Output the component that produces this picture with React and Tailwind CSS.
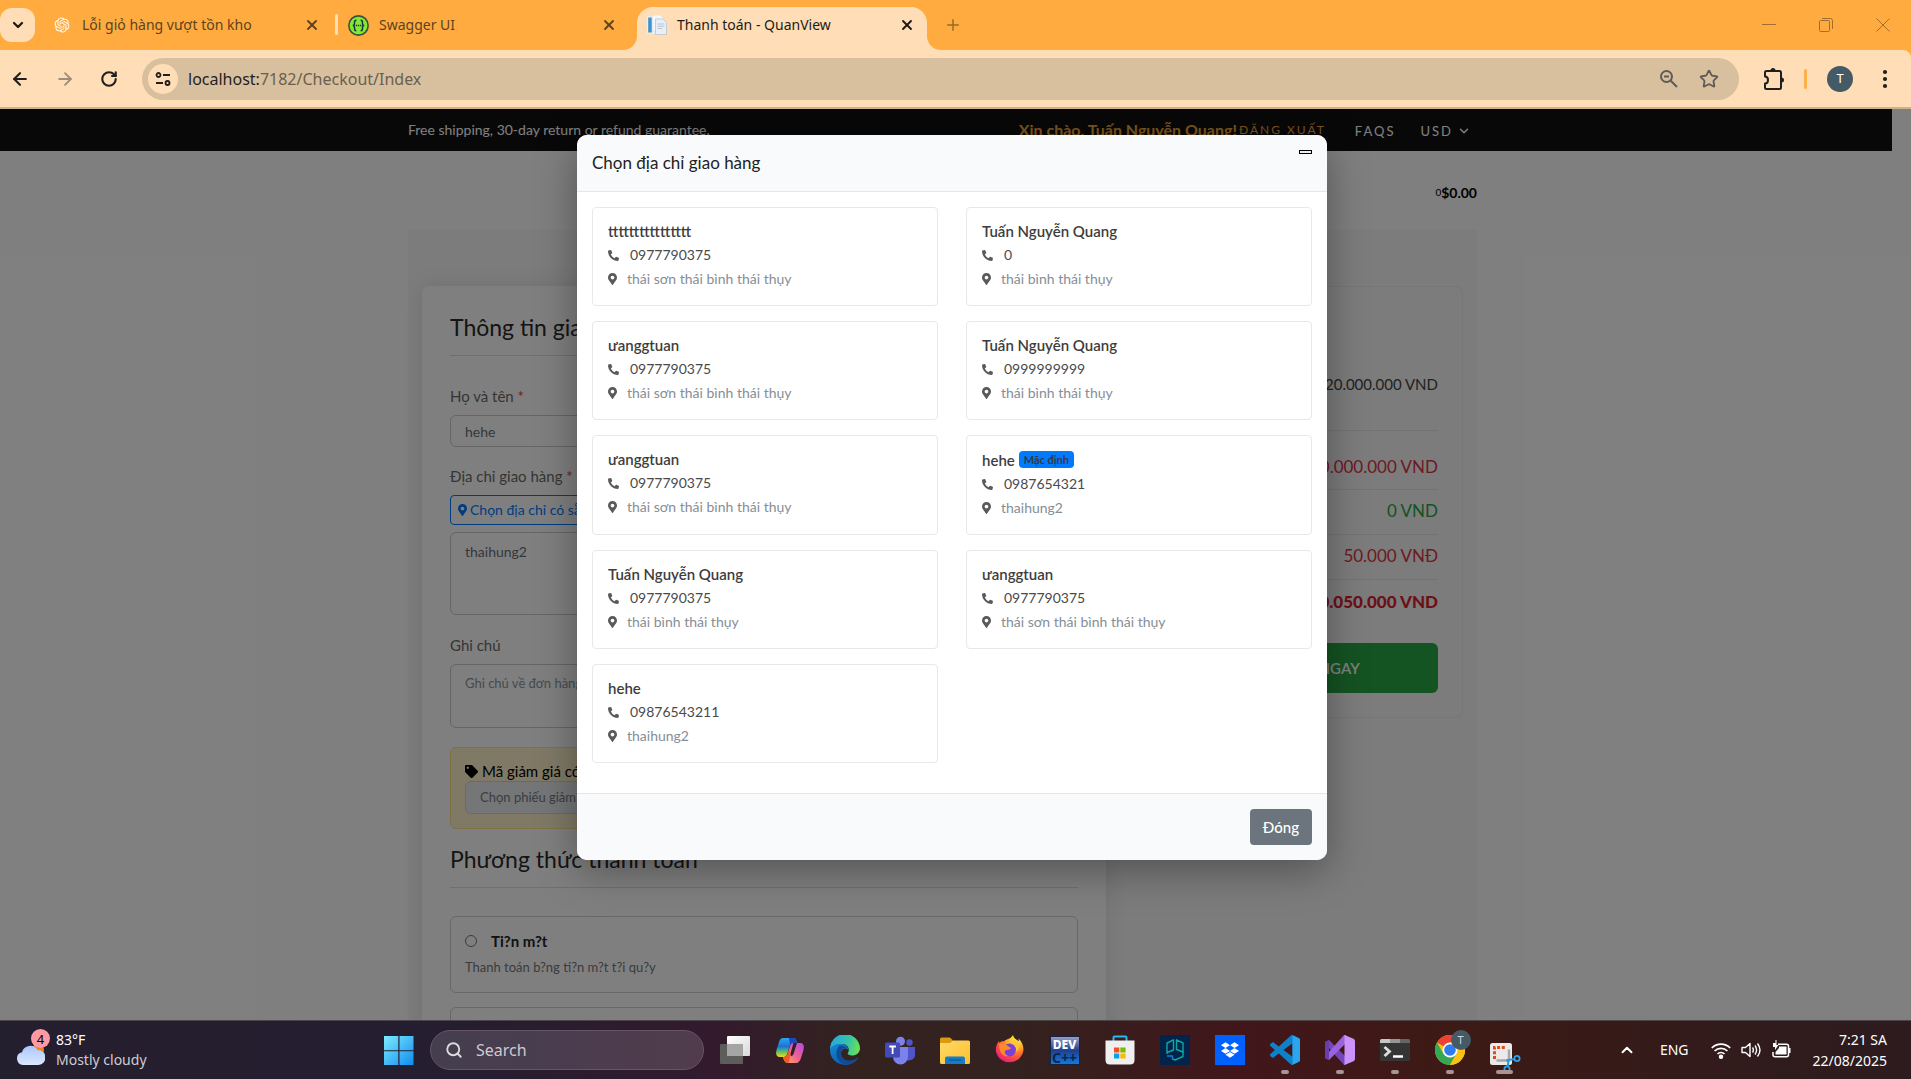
import React from "react";
import { ArrowLeft, ArrowRight, ChevronDown, ChevronUp, Plus, RotateCw, Search, Star, X } from "lucide-react";
import { FaDropbox, FaMapMarkerAlt, FaPhoneAlt, FaTag } from "react-icons/fa";
import { RiOpenaiFill } from "react-icons/ri";

/* ---------- Browser window ---------- */

function SwaggerIcon() {
  return (
    <svg viewBox="0 0 20 20" className="size-[21px] shrink-0">
      <circle cx="10" cy="10" r="9.2" fill="#85ea2d" stroke="#35543f" strokeWidth="1.5" />
      <path d="M8 5C6 5 6.200 6.500 6.200 8 6.200 9.300 5.600 10 4.500 10 5.600 10 6.200 10.700 6.200 12 6.200 13.500 6 15 8 15" fill="none" stroke="#173647" strokeWidth="1.4" />
      <path d="M12 5C14 5 13.800 6.500 13.800 8 13.800 9.300 14.400 10 15.500 10 14.400 10 13.800 10.700 13.800 12 13.800 13.500 14 15 12 15" fill="none" stroke="#173647" strokeWidth="1.4" />
      <path d="M7.400 10h5.400" stroke="#173647" strokeWidth="1.5" strokeDasharray="1.300 .7" />
    </svg>
  );
}

function PageIcon() {
  return (
    <svg viewBox="0 0 20 20" className="size-5 shrink-0">
      <path d="M0 1.500h12v17H0z" fill="#e9f1f8" />
      <path d="M1.200 2.500h3.600v15H1.200z" fill="#3d93cf" />
      <path d="M5.200 0h8l3.500 3.500V16H5.200z" fill="#f3f7fb" stroke="#c9d4df" strokeWidth=".5" />
      <path d="M8.500 4h7.500l3.500 3.500v12H8.500z" fill="#e8eff6" stroke="#a9b8c8" strokeWidth=".6" />
      <path d="M10.500 9h7M10.500 11.200h7M10.500 13.400h5" stroke="#b5c0cc" strokeWidth=".9" />
    </svg>
  );
}

function TabClose({ dark }) {
  return (
    <button aria-label="Close tab" className={dark ? "text-[#1f1a14]" : "text-[#5c431f]"}>
      <X className="size-4" strokeWidth={2.8} />
    </button>
  );
}

function TabStrip() {
  return (
    <div className="flex h-[50px] items-end bg-[#ffab40]">
      <button aria-label="Search tabs" className="mb-2 flex h-[34px] w-[35px] shrink-0 items-center justify-center rounded-xl bg-[#ffdeb7] text-[#1f1a14]">
        <ChevronDown className="size-4" strokeWidth={3.4} />
      </button>
      <div className="flex h-[50px] w-[300px] shrink-0 items-center pl-[18px] pr-[15px] text-sm text-[#5c431f]">
        <RiOpenaiFill className="size-[18px] text-white" />
        <span className="ml-[11px] flex-1 whitespace-nowrap">Lỗi giỏ hàng vượt tồn kho</span>
        <TabClose />
      </div>
      <div className="mb-[15px] h-[21px] w-[3px] shrink-0 rounded bg-[#ffdeb7]" />
      <div className="flex h-[50px] w-[299px] shrink-0 items-center pl-[10px] pr-[20px] text-sm text-[#5c431f]">
        <SwaggerIcon />
        <span className="ml-[10px] flex-1">Swagger UI</span>
        <TabClose />
      </div>
      <div className="relative flex h-[43px] w-[290px] shrink-0 items-center rounded-t-2xl bg-[#ffdeb7] pb-[7px] pl-[10px] pr-[12px] text-sm text-[#1f1a14]">
        <svg viewBox="0 0 14 14" className="absolute -left-[14px] bottom-0 size-[14px]"><path d="M14 0v14H0A14 14 0 0 0 14 0z" fill="#ffdeb7" /></svg>
        <svg viewBox="0 0 14 14" className="absolute -right-[14px] bottom-0 size-[14px]"><path d="M0 0v14h14A14 14 0 0 1 0 0z" fill="#ffdeb7" /></svg>
        <PageIcon />
        <span className="ml-[10px] flex-1">Thanh toán - QuanView</span>
        <TabClose dark />
      </div>
      <button aria-label="New tab" className="mb-[16px] ml-[17px] text-[#9b6a2b]"><Plus className="size-[18px]" /></button>
      <div className="ml-auto flex h-[50px] items-center gap-[43px] pr-[21px] text-[#a06e2e]">
        <button aria-label="Minimize"><svg viewBox="0 0 14 14" className="size-[14px]"><path d="M0 6.500h14" stroke="currentColor" /></svg></button>
        <button aria-label="Restore"><svg viewBox="0 0 14 14" className="size-[14px]" fill="none" stroke="currentColor"><rect x=".5" y="2.500" width="10" height="11" rx="1" /><path d="M3 .5h8.500a2 2 0 0 1 2 2V11" /></svg></button>
        <button aria-label="Close"><svg viewBox="0 0 14 14" className="size-[14px]"><path d="M.5.5l13 13M13.500.5l-13 13" stroke="currentColor" /></svg></button>
      </div>
    </div>
  );
}

function Toolbar() {
  return (
    <div className="bg-[#ffab40]">
      <div className="flex h-[59px] items-center rounded-tr-lg border-b-2 border-[#cdb189] bg-[#ffdeb7] pl-[10px] text-[#1f1f1f]">
        <div className="flex w-[132px] shrink-0 items-center gap-[25px]">
          <button aria-label="Back"><ArrowLeft className="size-5" strokeWidth={2.5} /></button>
          <button aria-label="Forward" className="text-[#9c8e7b]"><ArrowRight className="size-5" strokeWidth={2.2} /></button>
          <button aria-label="Reload"><RotateCw className="size-[18px]" strokeWidth={2.8} /></button>
        </div>
        <div className="flex h-[42px] flex-1 items-center rounded-full bg-[#d8c09e] pl-[6px] pr-5">
          <button aria-label="Site information" className="flex size-[30px] items-center justify-center rounded-full bg-[#ffdeb7]">
            <svg viewBox="0 0 16 16" className="size-4" fill="none" stroke="currentColor" strokeWidth="1.8">
              <circle cx="3.500" cy="4" r="2" /><path d="M8 4h7M1 12h7" /><circle cx="12.500" cy="12" r="2" />
            </svg>
          </button>
          <div className="relative ml-[10px] flex-1 text-[16px]">
            <div aria-hidden="true"><span>localhost:</span><span className="text-[#6a5f50]">7182/Checkout/Index</span></div>
            <input aria-label="Address" className="absolute inset-0 w-full bg-transparent text-transparent outline-none" defaultValue="localhost:7182/Checkout/Index" />
          </div>
          <div className="flex items-center gap-5 text-[#5f5b58]">
            <button aria-label="Zoom">
              <svg viewBox="0 0 20 20" className="size-5" fill="none" stroke="currentColor" strokeWidth="2"><circle cx="7.500" cy="7.500" r="5.500" /><path d="M11.500 11.500l6.500 6.500M5 7.500h5" /></svg>
            </button>
            <button aria-label="Bookmark"><Star className="size-5" strokeWidth={2.2} strokeLinejoin="miter" /></button>
          </div>
        </div>
        <button aria-label="Extensions" className="ml-[24px]">
          <svg viewBox="0 0 22 24" className="h-6 w-[22px]" fill="none" stroke="currentColor" strokeWidth="2">
            <path d="M2 5.500Q2 4 3.500 4H16.500Q18 4 18 5.500V20.500Q18 22 16.500 22H3.500Q2 22 2 20.500V16.500C6 16.500 6 9.500 2 9.500z" strokeLinejoin="round" />
            <path d="M7.500 3.500a2.500 2.500 0 0 1 5 0zM18.500 10.500a2.500 2.500 0 0 1 0 5z" fill="currentColor" stroke="none" />
          </svg>
        </button>
        <div className="ml-[19px] h-5 w-[3px] rounded bg-[#ffb04a]" />
        <button aria-label="Profile" className="ml-[20px] flex size-[26px] items-center justify-center rounded-full bg-[#455a64] text-[13px] text-white">T</button>
        <button aria-label="Menu" className="ml-[29px] mr-[23px]">
          <svg viewBox="0 0 6 20" className="h-5 w-[6px]" fill="currentColor"><circle cx="3" cy="3" r="2.1" /><circle cx="3" cy="10" r="2.1" /><circle cx="3" cy="17" r="2.1" /></svg>
        </button>
      </div>
    </div>
  );
}

/* ---------- Checkout page ---------- */

function Field({ id, label, required, children, className = "" }) {
  return (
    <div className={className}>
      <label htmlFor={id} className="mb-[7px] block text-[15px] leading-6 text-[#6b6b6b]">
        {label}{required && <span className="text-[#dc3545]"> *</span>}
      </label>
      {children}
    </div>
  );
}

function SectionTitle({ children }) {
  return <h4 className="mb-7 border-b border-[#dedede] pb-[15px] text-[23px] leading-[26px] text-[#2a2a2a]">{children}</h4>;
}

const inputStyle = "block w-full rounded-md border border-[#c6cace] bg-white px-[14px] text-sm text-[#6a6f75] placeholder:text-[13px] placeholder:text-[#8d949b]";

function PaymentOption({ title, text }) {
  return (
    <div className="mb-[14px] h-[77px] rounded-md border border-[#cdd0d3] px-[14px] pt-[12px]">
      <label className="flex items-center text-[15px] font-bold leading-6 text-[#222]">
        <input type="radio" name="payment" className="mr-[14px] size-3" />{title}
      </label>
      <p className="mt-[2px] text-[13px] leading-6 text-[#777]">{text}</p>
    </div>
  );
}

function ShippingForm() {
  return (
    <form className="w-2/3 shrink-0 pl-[14px] pr-[15px]">
      <div className="rounded-lg bg-white px-7 pt-7 shadow-[0_0_22px_rgba(0,20,15,0.1)]">
        <SectionTitle>Thông tin giao hàng</SectionTitle>
        <Field id="name" label="Họ và tên" required className="mb-[17px]">
          <input id="name" className={inputStyle + " h-[32px]"} defaultValue="hehe" />
        </Field>
        <Field id="address" label="Địa chỉ giao hàng" required className="mb-[18px]">
          <button type="button" className="mb-[7px] flex h-[30px] items-center rounded-sm border border-[#007bff] px-[7px] text-sm text-[#007bff]">
            <FaMapMarkerAlt className="mr-[3px] h-3 w-[9px]" />Chọn địa chỉ có sẵn
          </button>
          <textarea id="address" className={inputStyle + " h-[83px] resize-none py-[9px]"} defaultValue="thaihung2" />
        </Field>
        <Field id="note" label="Ghi chú" className="mb-[19px]">
          <textarea id="note" className={inputStyle + " h-16 resize-none py-[9px]"} placeholder="Ghi chú về đơn hàng" />
        </Field>
        <div className="mb-[17px] rounded-md border border-[#ffe08a] bg-[#fff3cd] px-[14px] pb-[14px] pt-[13px]">
          <label htmlFor="voucher" className="flex items-center text-[15px] leading-5 text-black">
            <FaTag className="mr-1 size-[13px]" />Mã giảm giá có sẵn
          </label>
          <select id="voucher" className="block h-[33px] w-full appearance-none rounded-md border border-[#ced4da] bg-[#e9ecef] px-[14px] text-[13px] text-[#777c82]">
            <option>Chọn phiếu giảm giá</option>
          </select>
        </div>
        <SectionTitle>Phương thức thanh toán</SectionTitle>
        <PaymentOption title="Ti?n m?t" text="Thanh toán b?ng ti?n m?t t?i qu?y" />
        <PaymentOption title="Chuyển khoản" text="Thanh toán qua ngân hàng" />
      </div>
    </form>
  );
}

function OrderSummary() {
  const row = "flex h-[45px] items-center justify-end border-b border-[#e6e6e6] pb-[2px] text-[17px]";
  return (
    <aside className="w-1/3 px-[14px]">
      <div className="rounded-lg border border-[#ececec] px-6 pb-6 pt-[53px]">
        <p className="flex h-[91px] items-center justify-end border-b border-[#e6e6e6] pb-[2px] text-[15px] text-[#444]">20.000.000 VND</p>
        <p className="flex h-[59px] items-end justify-end border-b border-[#e6e6e6] pb-[10px] text-[17px] text-[#dc3545]">20.000.000 VND</p>
        <p className={row + " text-[#28a745]"}>0 VND</p>
        <p className={row + " text-[#dc3545]"}>50.000 VNĐ</p>
        <p className="mb-[18px] flex h-[45px] items-center justify-end pb-[2px] text-[17px] font-black text-[#d9232d]">20.050.000 VND</p>
        <button className="h-[50px] w-full rounded-md bg-[#28a745] text-[15px] font-semibold text-white">ĐẶT HÀNG NGAY</button>
      </div>
    </aside>
  );
}

function CheckoutPage() {
  return (
    <div className="h-full bg-white">
      <div className="mr-[19px] h-[42px] bg-[#111] pr-[7px]">
        <div className="mx-auto flex max-w-[1069px] items-center pt-[9px] leading-[22px]">
          <p className="text-sm text-white">Free shipping, 30-day return or refund guarantee.</p>
          <nav className="ml-auto flex items-center whitespace-nowrap pr-[6px] text-[13px] tracking-[2px] text-white">
            <span className="text-[16px] font-bold tracking-normal text-[#f6a83b]">Xin chào, Tuấn Nguyễn Quang!</span>
            <a href="#logout" className="ml-[2px] text-xs text-[#f6a83b]">ĐĂNG XUẤT</a>
            <a href="#faqs" className="ml-[29px] pt-[2px]">FAQS</a>
            <button className="ml-[25px] flex items-center gap-1 pt-[2px] tracking-[2px]">USD<ChevronDown className="size-[14px]" strokeWidth={2.5} /></button>
          </nav>
        </div>
      </div>
      <div className="pr-[26px]">
        <div className="mx-auto max-w-[1069px]">
          <header className="flex h-[79px] items-center justify-end pt-[4px] text-black">
            <span className="text-[10px]">0</span><span className="text-sm font-bold">$0.00</span>
          </header>
          <section className="flex items-start bg-[#f8f8f8] pt-14">
            <ShippingForm />
            <OrderSummary />
          </section>
        </div>
      </div>
    </div>
  );
}

/* ---------- Address dialog ---------- */

const addresses = [
  { name: "tttttttttttttttt", phone: "0977790375", address: "thái sơn thái bình thái thụy" },
  { name: "Tuấn Nguyễn Quang", phone: "0", address: "thái bình thái thụy" },
  { name: "ưanggtuan", phone: "0977790375", address: "thái sơn thái bình thái thụy" },
  { name: "Tuấn Nguyễn Quang", phone: "0999999999", address: "thái bình thái thụy" },
  { name: "ưanggtuan", phone: "0977790375", address: "thái sơn thái bình thái thụy" },
  { name: "hehe", phone: "0987654321", address: "thaihung2", isDefault: true },
  { name: "Tuấn Nguyễn Quang", phone: "0977790375", address: "thái bình thái thụy" },
  { name: "ưanggtuan", phone: "0977790375", address: "thái sơn thái bình thái thụy" },
  { name: "hehe", phone: "09876543211", address: "thaihung2" },
];

function AddressCard({ name, phone, address, isDefault }) {
  return (
    <div className="min-h-[99px] rounded border border-[#e6e8ea] px-[15px] pb-[14px] pt-[11px] text-[#4a4a4a]">
      <h6 className="flex items-center text-[15px] font-semibold leading-6 text-[#3d3d3d]">
        {name}
        {isDefault && <span className="ml-1 mt-[4px] mb-[4px] rounded bg-[#007bff] px-[5px] text-[11px] font-bold leading-[17px] text-[#33393f]">Mặc định</span>}
      </h6>
      <p className="flex items-center text-sm leading-6"><FaPhoneAlt className="mr-[11px] size-[11px] text-[#5a5a5a]" />{phone}</p>
      <p className="flex items-center text-sm leading-6 text-[#868e96]"><FaMapMarkerAlt className="mr-[10px] h-3 w-[9px] text-[#5a5a5a]" />{address}</p>
    </div>
  );
}

function AddressDialog() {
  return (
    <div role="dialog" aria-modal="true" aria-labelledby="dialog-title" className="w-full max-w-[750px] overflow-hidden rounded-[10px] bg-white shadow-[0_10px_40px_rgba(0,0,0,0.35)]">
      <div className="flex items-start justify-between border-b border-[#e4e7ea] bg-[#f8fafc] p-[15px]">
        <h5 id="dialog-title" className="text-[17px] leading-[26px] text-[#222]">Chọn địa chỉ giao hàng</h5>
        <button aria-label="Close" className="h-[4px] w-[13px] border border-black bg-[#efefef]" />
      </div>
      <div className="grid grid-cols-2 gap-x-7 gap-y-[15px] px-[15px] pb-[30px] pt-[15px]">
        {addresses.map((a, i) => <AddressCard key={i} {...a} />)}
      </div>
      <div className="flex justify-end border-t border-[#e4e7ea] bg-[#f8fafc] p-[15px]">
        <button className="h-9 rounded bg-[#6c757d] px-[13px] text-[15px] font-medium text-white">Đóng</button>
      </div>
    </div>
  );
}

/* ---------- Taskbar ---------- */

const TaskView = () => (
  <svg viewBox="0 0 30 30" className="size-[30px]"><defs><linearGradient id="tvw" x1="0" y1="0" x2="1" y2="1"><stop stopColor="#fff" /><stop offset="1" stopColor="#d9d9d9" /></linearGradient></defs>
    <rect x="7" y="1" width="23" height="20" rx="1" fill="url(#tvw)" /><rect y="9" width="23" height="20" rx="1" fill="#5d5d5b" /><path d="M7 9h16v12H7z" fill="#a5a5a5" /></svg>
);
const Copilot = () => (
  <svg viewBox="0 0 30 30" className="size-[30px]"><defs>
    <linearGradient id="cpl" x1="0" y1="0" x2="0" y2="1"><stop stopColor="#2aa7ef" /><stop offset=".45" stopColor="#1d72d8" /><stop offset=".7" stopColor="#4fc06a" /><stop offset="1" stopColor="#ffd21f" /></linearGradient>
    <linearGradient id="cpr" x1="1" y1="0" x2="0" y2="1"><stop stopColor="#b04be8" /><stop offset=".5" stopColor="#ef5f93" /><stop offset="1" stopColor="#ffb35c" /></linearGradient></defs>
    <path d="M8 3H18.500Q21 3 22 8H17.500Q15.500 8 14.700 11L12.500 18Q11.500 22 8.500 22H4Q0 21 1.500 15L4 7Q5.200 3 8 3z" fill="url(#cpl)" />
    <path d="M14 3h4.500Q21 3 22 8H17.500Q15.500 8 15 10z" fill="#1c46c4" />
    <path d="M22 8h4Q30 9 28.500 15L26 23Q24.500 28 21 28H12Q9 27 8 22h1Q12 22 13 18L15.200 10.500Q16 8 18 8h.5L15.500 18.500Q15 21 16.500 21T19.200 17z" fill="url(#cpr)" />
    <path d="M8 22h1Q12 22 13 18l1-3 1.600 3.500Q15 21 14 27.500L12 28Q9 27 8 22z" fill="#f05a2a" /></svg>
);
const Edge = () => (
  <svg viewBox="0 0 30 30" className="size-[30px]"><defs>
    <linearGradient id="eg1" x1="0" y1=".3" x2="1" y2=".5"><stop stopColor="#25a9e0" /><stop offset=".6" stopColor="#35c3a8" /><stop offset="1" stopColor="#6be255" /></linearGradient>
    <linearGradient id="eg2" x1="0" y1="0" x2=".6" y2="1"><stop stopColor="#1689d8" /><stop offset="1" stopColor="#0c59a4" /></linearGradient></defs>
    <path d="M0 15A15 15 0 0 1 30 13c0 5-4 7.500-8 7.500-3.500 0-5-1.200-4-2.800 2-3 .3-8.700-6-8.700C5.500 9 1 12 0 15z" fill="url(#eg1)" />
    <path d="M0 15C1 11 5.500 8.500 11 9c5 .4 7.500 3.500 7.400 6.500C17.500 12 12 13 11 17.500 10.300 23 16 27 22 25.500 26 24.500 27.500 22.500 28 22.500c.8 0-3.600 7.500-13 7.500A15 15 0 0 1 0 15z" fill="url(#eg2)" />
    <path d="M9.500 10.500C6 14 5 21 9 25.500c2 2.500 5 4.200 8 4.300 7-.8 10.600-6 11-7-1 0-2.500 2.300-6 2.900-6 1-12-3-11-8.700.7-3.500 4-5 6-3.500-1-2-4-3.500-7.500-3z" fill="#104c96" /></svg>
);
const Teams = () => (
  <svg viewBox="0 0 30 30" className="size-[30px]"><circle cx="24.500" cy="7.500" r="3.200" fill="#4d55c9" /><circle cx="15.500" cy="6.300" r="4.500" fill="#7b83eb" />
    <path d="M18 12h12v8a6 6 0 0 1-10 4z" fill="#4d55c9" /><path d="M8 12h15v10a7.400 7.400 0 0 1-15 0z" fill="#7b83eb" /><rect y="7.500" width="15" height="15" rx="1.500" fill="#4349b5" />
    <path d="M4.300 11.500h6.600M7.600 11.500v7.500" stroke="#fff" strokeWidth="1.8" /></svg>
);
const Explorer = () => (
  <svg viewBox="0 0 30 30" className="size-[30px]"><defs><linearGradient id="fx" x1="0" y1="0" x2="1" y2="1"><stop stopColor="#ffd966" /><stop offset="1" stopColor="#fdc02f" /></linearGradient></defs>
    <path d="M0 4q0-1.500 1.500-1.500H10l3 3V9H0z" fill="#dd9a10" /><path d="M0 8h10l3-2.500h15.500Q30 5.500 30 7v20.500q0 1.500-1.500 1.500h-27Q0 29 0 27.500z" fill="url(#fx)" /><path d="M5 29v-5.500q0-2 2-2h16q2 0 2 2V29z" fill="#147cc8" /><path d="M9 25h12" stroke="#0b5794" strokeWidth="1.2" /></svg>
);
const Firefox = () => (
  <svg viewBox="0 0 30 30" className="size-[30px]"><defs><radialGradient id="ff" cx=".75" cy=".12" r="1"><stop stopColor="#fff04a" /><stop offset=".35" stopColor="#ffac28" /><stop offset=".65" stopColor="#ff5a35" /><stop offset="1" stopColor="#e31587" /></radialGradient></defs>
    <path d="M18 0c1 4 4 5 6 6l-.5-2.500c3.500 3 5 7.500 5 11A14 14 0 0 1 .8 16C.5 11 2.500 8 4 6l.5 2C6 6 7 6 9 6.500 11 3.500 15 5 18 0z" fill="url(#ff)" />
    <circle cx="14.500" cy="15" r="6.500" fill="#7a41d8" /><path d="M4 9c4-1 7 0 9.500 2.500L16 13c-1.500 2.500-4.500 1-6 3-1 2 1 4 3 5C8 22 4 17 4 9z" fill="#ff8a2b" /><path d="M14 8c5-1 8.500 4 6.500 9 5-3 4-10-1-12z" fill="#ffc53a" /></svg>
);
const DevCpp = () => (
  <div className="flex h-[29px] w-[30px] flex-col items-center overflow-hidden border border-[#14233f] bg-linear-to-b from-[#9b9bc4] via-[#1f3f8f] to-[#0a7be0] leading-none">
    <span className="text-[12px] font-extrabold leading-[15px] text-white">DEV</span><span className="text-[14px] font-bold leading-[12px] text-[#082650]">C++</span>
  </div>
);
const Store = () => (
  <svg viewBox="0 0 30 30" className="size-[30px]"><path d="M8.500 7V2.500Q8.500 1.500 9.500 1.500h11Q21.500 1.500 21.500 2.500V7" fill="none" stroke="#2bb8ef" strokeWidth="2" /><path d="M.5 5.500h29V25q0 4.500-4.500 4.500H5Q.5 29.500 .5 25z" fill="#efefef" />
    <path d="M9 12.500h5.300v5H9z" fill="#f25022" /><path d="M15.300 12.500h5.300v5h-5.300z" fill="#7fba00" /><path d="M9 18.500h5.300v5H9z" fill="#00a4ef" /><path d="M15.300 18.500h5.300v5h-5.300z" fill="#ffb900" /></svg>
);
const PgIcon = () => (
  <svg viewBox="0 0 30 30" className="size-[30px]"><path d="M0 0h30v30H0z" fill="#02244a" />
    <g fill="none" strokeWidth="1.4" strokeLinejoin="round"><path d="M7 19V8l6.500-3.200V15L7 17.500" stroke="#0da7a5" /><path d="M16.500 4.800L23 8v9l-6.500-2.500z" stroke="#0da7a5" /><path d="M23 16v5.500L15 25l-2.500-1.200" stroke="#0fa78e" /><path d="M7 21h5.500v4" stroke="#137bd0" /></g></svg>
);
const Dropbox = () => (
  <span className="flex size-[30px] items-center justify-center bg-[#0061ff] text-white"><FaDropbox className="size-[18px]" /></span>
);
const VsCode = () => (
  <svg viewBox="0 0 24 24" className="size-[30px]"><path fill="#1080c8" d="M23.150 2.587L18.210.21a1.494 1.494 0 0 0-1.705.29l-9.460 8.630-4.120-3.128a.999.999 0 0 0-1.276.057L.327 7.261A1 1 0 0 0 .326 8.740L3.899 12 .326 15.260a1 1 0 0 0 .001 1.479L1.650 17.940a.999.999 0 0 0 1.276.057l4.120-3.128 9.460 8.630a1.492 1.492 0 0 0 1.704.290l4.942-2.377A1.500 1.500 0 0 0 24 20.060V3.939a1.500 1.500 0 0 0-.850-1.352zm-5.146 14.861L10.826 12l7.178-5.448v10.896z" />
    <path fill="#2ba6ee" d="M18 .15l5.150 2.437A1.500 1.500 0 0 1 24 3.940v16.120a1.500 1.500 0 0 1-.85 1.352L18 23.850z" /></svg>
);
const VisualStudio = () => (
  <svg viewBox="0 0 30 30" className="size-[30px]"><path d="M0 7l4-2 17 17v8h-2L3 12z" fill="#7446b8" /><path d="M0 23l4 2 17-17V0h-2L3 18z" fill="#9a63dd" /><path d="M0 7l4-2v20l-4-2z" fill="#6a3dad" /><path d="M19.500 0l9 3.800Q30 4.500 30 6v18q0 1.500-1.500 2.200l-9 3.800z" fill="#cb92fb" /></svg>
);
const Terminal = () => (
  <svg viewBox="0 0 30 30" className="size-[30px]"><rect y="4" width="30" height="22" rx="1.500" fill="#353535" /><path d="M0 8V5.500Q0 4 1.500 4H10v4z" fill="#c6c6c6" /><path d="M10 4h10v4H10z" fill="#969696" /><path d="M20 4h8.500Q30 4 30 5.500V8H20z" fill="#656565" /><path d="M4.500 12l5 4.500-5 4.500" fill="none" stroke="#ddd" strokeWidth="2.8" /><path d="M13 21.500h10" stroke="#fff" strokeWidth="2.5" /></svg>
);
const Chrome = () => (
  <span className="relative">
    <svg viewBox="0 0 30 30" className="size-[30px]"><circle cx="15" cy="15" r="15" fill="#fbc116" /><path d="M15 15L2 7.500A15 15 0 0 1 28 7.500H15z" fill="#ea4335" /><path d="M15 15l-6.500 3.750L2 7.500A15 15 0 0 0 15 30l6.500-11.250z" fill="#34a853" /><path d="M15 7.500h13A15 15 0 0 1 15 30l6.500-11.250z" fill="#fbc116" /><circle cx="15" cy="15" r="7.500" fill="#fff" /><circle cx="15" cy="15" r="5.800" fill="#2f7bf0" /></svg>
    <span className="absolute -right-[6px] -top-[5px] flex size-5 items-center justify-center rounded-full bg-[#455a64] text-[11px] text-[#cfd8dc]">T</span>
  </span>
);
const Snip = () => (
  <svg viewBox="0 0 30 30" className="size-[30px] overflow-visible"><rect y="8" width="22" height="22" rx="2.500" fill="#eceae8" /><path d="M4.500 24V12.500H16" fill="none" stroke="#e04a1d" strokeWidth="3" strokeDasharray="3 1.700" /><path d="M6.500 25.500h12.500v-11" fill="none" stroke="#a4a8ac" strokeWidth="2.5" /><path d="M18.500 26.500l-2-2M18 25l7-1" stroke="#2a9ade" strokeWidth="2" /><circle cx="27" cy="23.500" r="2.600" fill="none" stroke="#2ea3e8" strokeWidth="1.8" /><circle cx="17" cy="34" r="2.600" fill="none" stroke="#2ea3e8" strokeWidth="1.8" /><path d="M18.500 25.500l-.8 6" stroke="#2a9ade" strokeWidth="2" /></svg>
);

const apps = [
  ["Task view", TaskView], ["Copilot", Copilot], ["Edge", Edge], ["Teams", Teams], ["File Explorer", Explorer], ["Firefox", Firefox],
  ["Dev-C++", DevCpp], ["Microsoft Store", Store], ["Database tool", PgIcon], ["Dropbox", Dropbox],
  ["Visual Studio Code", VsCode, "w-2"], ["Visual Studio", VisualStudio, "w-2"], ["Terminal", Terminal, "w-2"], ["Chrome", Chrome, "w-2"], ["Snipping Tool", Snip, "w-[17px]"],
];

function Weather() {
  return (
    <button className="flex items-center gap-[11px] justify-self-start text-left text-sm leading-5 text-white">
      <span className="relative">
        <svg viewBox="0 0 28 34" className="h-[34px] w-7"><defs><linearGradient id="cl" x1="0" y1="0" x2="0" y2="1"><stop stopColor="#a9c7fb" /><stop offset="1" stopColor="#dbe9ff" /></linearGradient></defs>
          <circle cx="21" cy="17" r="6" fill="#f58220" /><path d="M6 32a6.500 6.500 0 0 1-1-12.800A8.500 8.500 0 0 1 20.500 17 7.500 7.500 0 0 1 21.500 32z" fill="url(#cl)" /></svg>
        <span className="absolute -right-[5px] -top-1 flex size-[19px] items-center justify-center rounded-full bg-[#ff99a4] text-[13px] text-black">4</span>
      </span>
      <span className="flex flex-col"><span>83°F</span><span className="text-[#cfccd2]">Mostly cloudy</span></span>
    </button>
  );
}

function Taskbar() {
  return (
    <footer className="grid h-[59px] shrink-0 grid-cols-[1fr_auto_1fr] items-center border-t border-[#4b4549] bg-[linear-gradient(90deg,#241f2f_0%,#251d30_24%,#331a2e_37%,#33231f_45%,#33221f_53%,#42161b_65%,#3d1a15_76%,#331b1a_88%,#2d1b1f_100%)] pl-[17px] pr-6">
      <Weather />
      <div className="flex items-center">
        <button aria-label="Start" className="flex w-[55px] justify-center pr-[2px]">
          <svg viewBox="0 0 30 30" className="size-[30px]"><defs><linearGradient id="win" x1="0" y1="0" x2="1" y2="1"><stop stopColor="#7cecfd" /><stop offset="1" stopColor="#0f8cf0" /></linearGradient></defs><path d="M0 1h14.300v14.300H0zM15.500 1H29.500v14.300H15.500zM0 16.300h14.300V30H0zM15.500 16.300h14V30h-14z" fill="url(#win)" /></svg>
        </button>
        <label className="mx-[3px] flex h-10 w-[274px] items-center rounded-full border border-[#665566] bg-white/15 px-[14px] text-white">
          <Search className="size-[18px] shrink-0 text-[#dedae0]" strokeWidth={2.5} />
          <input aria-label="Search" placeholder="Search" className="ml-[13px] w-full bg-transparent text-[16px] outline-none placeholder:text-[#cfc9d1]" />
        </label>
        {apps.map(([name, Icon, dot]) => (
          <button key={name} aria-label={name} className="relative flex h-[58px] w-[55px] items-center justify-center">
            <Icon />
            {dot && <span className={"absolute bottom-[5px] h-1 rounded-full bg-[#a89495] " + dot} />}
          </button>
        ))}
      </div>
      <div className="flex items-center justify-self-end text-sm text-white">
        <button aria-label="Show hidden icons"><ChevronUp className="size-[18px]" strokeWidth={2.6} /></button>
        <span className="ml-6">ENG</span>
        <svg viewBox="0 0 20 20" className="ml-[22px] size-5" fill="none" stroke="currentColor" strokeWidth="1.7"><path d="M.8 8A13 13 0 0 1 19.200 8M3.600 11a9 9 0 0 1 12.800 0M6.500 14a5 5 0 0 1 7 0" /><circle cx="10" cy="16.800" r="1.400" fill="currentColor" /></svg>
        <svg viewBox="0 0 20 20" className="ml-[10px] size-5" fill="none" stroke="currentColor" strokeWidth="1.4" strokeLinejoin="round"><path d="M1 7.500h3.500L9 3.500v13L4.500 12.500H1zM11.500 7.500q1.800 2.500 0 5M14 5.500q3.200 4.500 0 9M16.500 3.500q5 6.500 0 13" /></svg>
        <svg viewBox="0 0 20 20" className="ml-[10px] size-5"><path d="M7 4.200h8.500q2 0 2 2v8.600q0 2-2 2H4q-2 0-2-2V12" fill="none" stroke="#fff" strokeWidth="1.5" /><path d="M8 6.500h7.500v8H4.500V12L8 8zM18 8h1.500v5H18z" fill="#fff" /><path d="M4.500 0v3H2v4h2v3l3.500-5H5.500V0z" fill="#fff" /></svg>
        <time className="ml-[22px] flex flex-col text-right leading-[21px]"><span>7:21 SA</span><span>22/08/2025</span></time>
      </div>
    </footer>
  );
}

export default function App() {
  return (
    <div className="flex h-screen flex-col overflow-hidden font-['Noto_Sans',sans-serif]">
      <TabStrip />
      <Toolbar />
      <main className="relative min-h-0 flex-1 overflow-hidden font-['Lato',sans-serif]">
        <CheckoutPage />
        <div className="absolute inset-0 flex items-start justify-center bg-black/50 pr-[7px] pt-[26px]">
          <AddressDialog />
        </div>
      </main>
      <Taskbar />
    </div>
  );
}
